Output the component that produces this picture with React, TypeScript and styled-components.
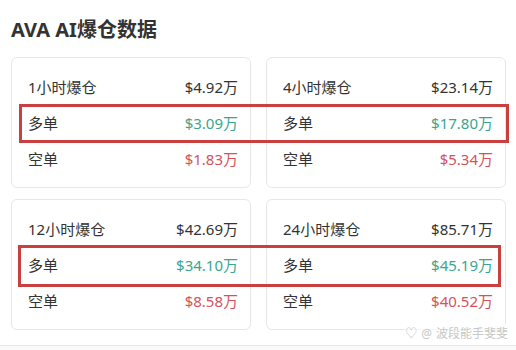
import * as React from "react"
import styled, { createGlobalStyle } from "styled-components"

const GlobalStyle = createGlobalStyle`
    html, body {
        margin: 0;
        padding: 0;
        background: #ffffff;
    }
    body {
        font-family: "Noto Sans", "Noto Sans CJK SC", sans-serif;
        color: #333;
    }
`

type Row = { label: string; total: string; long: string; short: string }

const rows: Row[] = [
    { label: "1小时爆仓", total: "$4.92万", long: "$3.09万", short: "$1.83万" },
    { label: "4小时爆仓", total: "$23.14万", long: "$17.80万", short: "$5.34万" },
    { label: "12小时爆仓", total: "$42.69万", long: "$34.10万", short: "$8.58万" },
    { label: "24小时爆仓", total: "$85.71万", long: "$45.19万", short: "$40.52万" },
]

const App = () => {
    return (
        <Page>
            <GlobalStyle />
            <Title>AVA AI爆仓数据</Title>
            <Grid>
                {rows.map((r) => (
                    <Card key={r.label}>
                        <Line>
                            <Label>{r.label}</Label>
                            <Value>{r.total}</Value>
                        </Line>
                        <Line>
                            <Label>多单</Label>
                            <Value $tone="long">{r.long}</Value>
                        </Line>
                        <Line>
                            <Label>空单</Label>
                            <Value $tone="short">{r.short}</Value>
                        </Line>
                    </Card>
                ))}
            </Grid>
            <Footer />
            <Mark $top={104} $left={19} $width={490} $height={39} />
            <Mark $top={245} $left={18} $width={483} $height={42} />
            <Watermark>
                <span>♡</span>
                <span>@</span>
                波段能手斐斐
            </Watermark>
        </Page>
    )
}
export default App

const Page = styled.div`
    position: relative;
    width: 516px;
    height: 350px;
    overflow: hidden;
    box-sizing: border-box;
    padding: 16px 0 0 11px;
`

const Title = styled.h1`
    margin: 0;
    font-size: 20px;
    line-height: 28px;
    font-weight: 700;
    color: #333;
`

const Grid = styled.div`
    display: grid;
    grid-template-columns: 240px 240px;
    column-gap: 15px;
    row-gap: 11px;
    margin-top: 13px;
`

const Card = styled.div`
    box-sizing: border-box;
    height: 131px;
    padding: 11px 12px 11px 16px;
    border: 1px solid #e7e7e7;
    border-radius: 6px;
    background: #fff;
    display: flex;
    flex-direction: column;
`

const Line = styled.div`
    height: 36px;
    display: flex;
    align-items: center;
    justify-content: space-between;
    font-size: 15px;
`

const Label = styled.span`
    color: #333;
`

const Value = styled.span<{ $tone?: "long" | "short" }>`
    color: ${(p) => (p.$tone === "long" ? "#3aa68c" : p.$tone === "short" ? "#d6525b" : "#333")};
`

const Footer = styled.div`
    margin: 15px 0 0 -11px;
    height: 10px;
    border-top: 1px solid #e6e6e6;
    background: #fafafa;
`

const Mark = styled.div<{ $top: number; $left: number; $width: number; $height: number }>`
    position: absolute;
    top: ${(p) => p.$top}px;
    left: ${(p) => p.$left}px;
    width: ${(p) => p.$width}px;
    height: ${(p) => p.$height}px;
    box-sizing: border-box;
    border: 3px solid #c9403f;
    pointer-events: none;
`

const Watermark = styled.div`
    position: absolute;
    right: 8px;
    top: 324px;
    display: flex;
    align-items: center;
    gap: 4px;
    font-size: 12px;
    color: #c8c8c8;
    background: rgba(255, 255, 255, 0.6);
`
